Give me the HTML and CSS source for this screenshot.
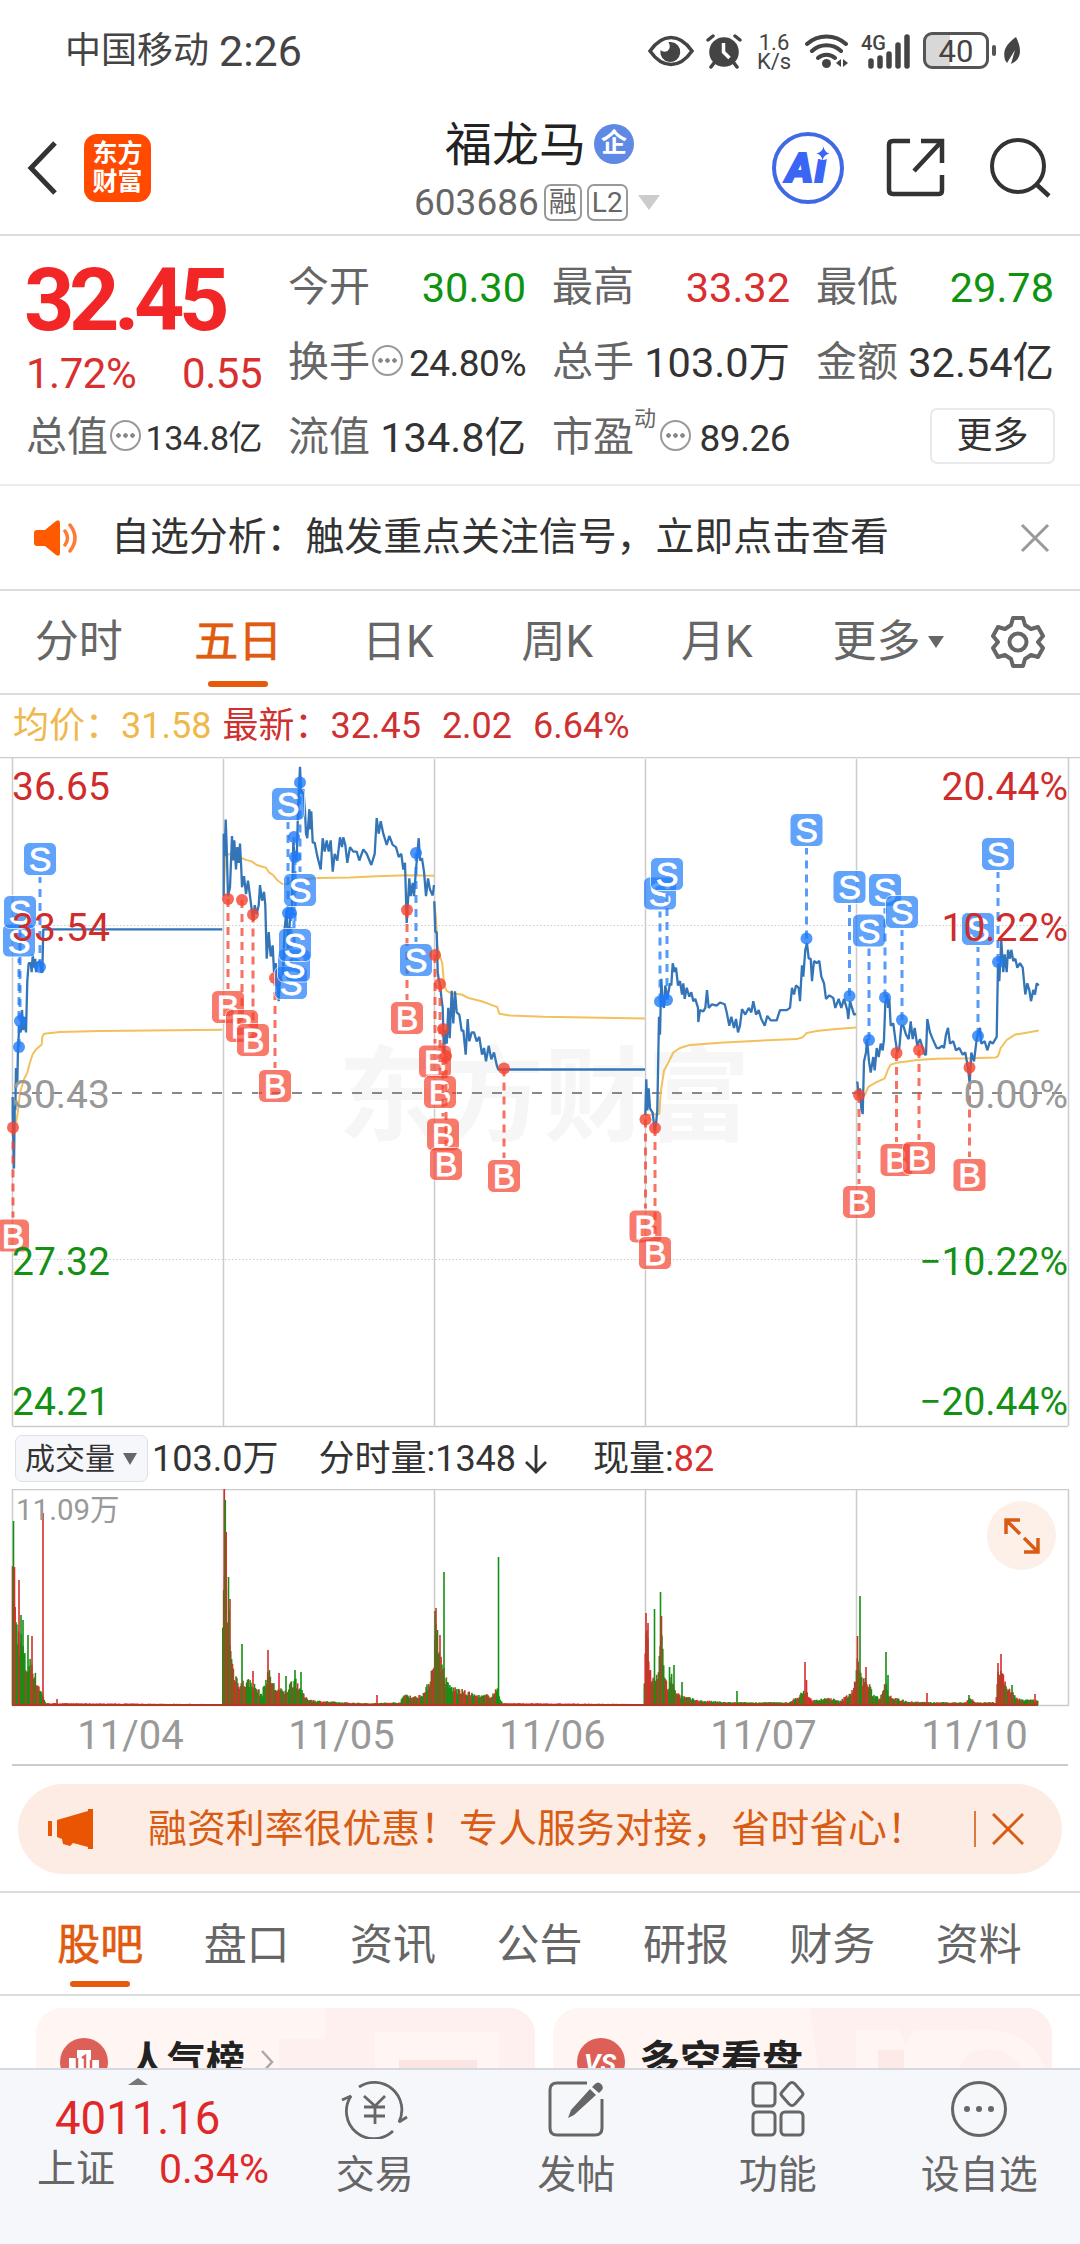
FILE: index.html
```html
<!DOCTYPE html>
<html lang="zh-CN">
<head>
    <meta charset="UTF-8">
    <meta name="viewport" content="width=device-width, initial-scale=1.0">
    <title>福龙马 603686</title>
    <link rel="stylesheet" href="styles.css">
</head>
<body>

<div class="app">
    <div class="status-bar">
        <span class="carrier">中国移动</span>
        <span class="time">2:26</span>
        <div class="status-icons">
            <svg class="i-eye" width="46" height="32" viewBox="0 0 46 32"><path d="M2 16C9 6 16 2.500 23 2.500S37 6 44 16C37 26 30 29.500 23 29.500S9 26 2 16z" fill="none" stroke="#444" stroke-width="3.500"/><path d="M23 7a10 10 0 1 1-10.500 8q3 3 7 1 4-3 1-9z" fill="#444"/></svg>
            <svg class="i-alarm" width="36" height="36" viewBox="0 0 36 36"><circle cx="18" cy="19" r="14.800" fill="#444"/><path d="M2 7l5-4M34 7l-5-4M8 30l-3 4M28 30l3 4" stroke="#444" stroke-width="3.500" stroke-linecap="round"/><path d="M17.500 10v9l6 6" fill="none" stroke="#fff" stroke-width="3.500"/></svg>
            <div class="speed">1.6<br>K/s</div>
            <svg class="i-wifi" width="44" height="36" viewBox="0 0 44 36"><g fill="none" stroke="#444" stroke-width="4" stroke-linecap="round"><path d="M2 11a29 29 0 0 1 39 0M7 18a21 21 0 0 1 29 0M13 25a13 13 0 0 1 17 0"/></g><circle cx="21.500" cy="30.500" r="4.500" fill="#444"/><path d="M36 26v8l-5-4zM38 26v8l5-4z" fill="#444"/></svg>
            <svg class="i-signal" width="52" height="38" viewBox="0 0 52 38"><text class="net" x="1" y="18">4G</text><path d="M11 34v-5M20 34v-8M29 34V22M38 34V13M47 34V5" stroke="#444" stroke-width="5.500" stroke-linecap="round"/></svg>
            <div class="battery">40</div>
            <svg class="i-leaf" width="18" height="30" viewBox="0 0 18 30"><path d="M2 24C-1 13 5 7 13 1c6 12 6 22-5 27l4-14-8 13z" fill="#444"/></svg>
        </div>
    </div>

    <div class="header">
        <svg class="back" width="32" height="56" viewBox="0 0 32 56"><path d="M28 3L4 28l24 25" fill="none" stroke="#333" stroke-width="5"/></svg>
        <div class="logo">东方<br>财富</div>
        <div class="title">
            <div class="name">福龙马<span class="corp">企</span></div>
            <div class="code">603686<span class="tag">融</span><span class="tag">L2</span><i class="down"></i></div>
        </div>
        <svg class="ai" width="74" height="74" viewBox="0 0 74 74"><circle cx="37" cy="37" r="34" fill="#fff" stroke="#4169e6" stroke-width="4"/><text class="ai-text" x="15" y="51">Ai</text><circle cx="52" cy="22" r="7" fill="#fff"/><path d="M52.500 15.500q1 6 6 7-6 1.500-7 7-1-6-6-7 6-1.500 7-7z" fill="#3b66f5"/></svg>
        <svg class="share" width="60" height="60" viewBox="0 0 60 60"><g fill="none" stroke="#333" stroke-width="4.500"><path d="M24 3H7q-4 0-4 4v45q0 4 4 4h46q3 0 3-4V37M35 3h21v22M56 3L28 33"/></g></svg>
        <svg class="search" width="62" height="62" viewBox="0 0 62 62"><circle cx="28" cy="29" r="26" fill="none" stroke="#333" stroke-width="4"/><path d="M46 47l13 12" stroke="#333" stroke-width="4.500"/></svg>
    </div>

    <div class="quote">
        <div class="main-price">
            <div class="price">32.45</div>
            <div class="change red"><span>1.72%</span><span>0.55</span></div>
        </div>
        <div class="cell open"><span class="label">今开</span><b class="green">30.30</b></div>
        <div class="cell"><span class="label">最高</span><b class="red">33.32</b></div>
        <div class="cell"><span class="label">最低</span><b class="green">29.78</b></div>
        <div class="cell"><span class="label">换手</span><i class="info"></i><b class="mid">24.80%</b></div>
        <div class="cell"><span class="label">总手</span><b>103.0万</b></div>
        <div class="cell"><span class="label">金额</span><b>32.54亿</b></div>
        <div class="cell"><span class="label">总值</span><i class="info"></i><b class="small">134.8亿</b></div>
        <div class="cell"><span class="label">流值</span><b>134.8亿</b></div>
        <div class="cell"><span class="label">市盈</span><span class="sup">动</span><i class="info"></i><b class="mid">89.26</b></div>
        <div class="cell"><button class="more">更多</button></div>
    </div>

    <div class="notice">
        <svg width="46" height="38" viewBox="0 0 46 38"><path d="M3 11h8L22 2q4-2 4 2v30q0 4-4 2l-11-9H3q-3 0-3-3V14q0-3 3-3z" fill="#ff5a00"/><path d="M31 12q5 7 0 14M36 6q10 13 0 26" fill="none" stroke="#ff7a33" stroke-width="3.500" stroke-linecap="round"/></svg>
        <span class="notice-text">自选分析：触发重点关注信号，立即点击查看</span>
        <svg width="30" height="30" viewBox="0 0 30 30"><path d="M2 2l26 26M28 2L2 28" stroke="#999" stroke-width="3"/></svg>
    </div>

    <div class="period-tabs">
        <span>分时</span>
        <span class="active">五日</span>
        <span>日K</span>
        <span>周K</span>
        <span>月K</span>
        <span class="more-tab">更多<i></i></span>
        <svg width="54" height="54" viewBox="0 0 54 54"><g fill="none" stroke="#666" stroke-width="4" stroke-linejoin="round"><path d="M22 3h10l2 7 6 4 7-2 5 9-5 6 5 6-5 9-7-2-6 4-2 7H22l-2-7-6-4-7 2-5-9 5-6-5-6 5-9 7 2 6-4z"/><circle cx="27" cy="27" r="8.500"/></g></svg>
    </div>

    <div class="avg-line">
        <span class="gold">均价：31.58</span>
        <span class="latest">最新：32.45</span>
        <span>2.02</span>
        <span>6.64%</span>
    </div>

    <svg class="price-chart" width="1080" height="671" viewBox="0 0 1080 671">
        <text class="watermark" x="338" y="376">东方财富</text>
        <g class="grid">
            <path d="M0 .5H1080M12.500 669.500H1068M12.500 0V669M223.500 2V669M434.500 2V669M645.500 2V669M856.500 2V669M1068.500 0V669"/>
            <path class="dots" d="M15 168.500H1068M15 502.500H1068"/>
            <path class="zero" d="M12 336H1068"/>
        </g>
        <g id="lines"></g>
        <g id="marks"></g>
        <g class="axis">
            <text class="r" x="12" y="43">36.65</text>
            <text class="r" x="12" y="184">33.54</text>
            <text class="n" x="12" y="351">30.43</text>
            <text class="g" x="12" y="518">27.32</text>
            <text class="g" x="12" y="658">24.21</text>
            <text class="r end" x="1068" y="43">20.44%</text>
            <text class="r end" x="1068" y="184">10.22%</text>
            <text class="n end" x="1068" y="351">0.00%</text>
            <text class="g end" x="1068" y="518">−10.22%</text>
            <text class="g end" x="1068" y="658">−20.44%</text>
        </g>
    </svg>

    <div class="volume-info">
        <span class="select">成交量<i></i></span>
        <span>103.0万</span>
        <span class="minute">分时量:1348</span>
        <svg width="24" height="30" viewBox="0 0 24 30"><path d="M12 1v26M2 18l10 10 10-10" fill="none" stroke="#333" stroke-width="2.800"/></svg>
        <span class="now">现量:<em>82</em></span>
    </div>

    <div class="volume">
        <svg class="volume-chart" width="1080" height="218" viewBox="0 0 1080 218">
            <path class="frame" d="M12.500 216.500V.5H1068.500V216.500zM223.500 0V216M434.500 0V216M645.500 0V216M856.500 0V216"/>
            <g id="bars"></g>
            <text class="vol-max" x="16" y="31">11.09万</text>
        </svg>
        <div class="expand">
            <svg width="36" height="36" viewBox="0 0 36 36"><path d="M2 16V2h14M2 2l14 14M34 20v14H20M34 34L20 20" fill="none" stroke="#d95c14" stroke-width="3.500"/></svg>
        </div>
    </div>

    <div class="dates">
        <span>11/04</span><span>11/05</span><span>11/06</span><span>11/07</span><span>11/10</span>
    </div>

    <div class="promo">
        <svg width="46" height="40" viewBox="0 0 46 40"><path d="M9 11L40 2V0h5v40h-5v-2l-15-4-3 3-7-2-1-5-5-2zM0 12h4v15H0z" fill="#ea5504"/></svg>
        <span>融资利率很优惠！专人服务对接，省时省心！</span>
        <i class="bar"></i>
        <svg class="close" width="32" height="32" viewBox="0 0 32 32"><path d="M1 1l30 30M31 1L1 31" stroke="#d95c14" stroke-width="3"/></svg>
    </div>

    <div class="content-tabs">
        <span class="active">股吧</span>
        <span>盘口</span>
        <span>资讯</span>
        <span>公告</span>
        <span>研报</span>
        <span>财务</span>
        <span>资料</span>
    </div>

    <div class="cards">
        <div class="card">
            <svg class="deco" width="210" height="60" viewBox="0 0 210 60"><path d="M0 0h210v60H-46V31H0z" fill="#fdf0ee"/><path d="M50 24h124v36H50z" fill="#fff6f4"/><path d="M74 52h78v8H74z" fill="#fae5e2"/></svg>
            <svg width="48" height="48" viewBox="0 0 48 48"><circle cx="24" cy="24" r="24" fill="#dd6058"/><path d="M9 20h8v-8h14v10h8v15H9z" fill="#fff"/><path d="M17 20v15M31 22v13M22 20l3-2v13" fill="none" stroke="#dd6058" stroke-width="2.500"/></svg>
            <b>人气榜</b>
            <svg class="arrow" width="14" height="26" viewBox="0 0 14 26"><path d="M2 2l10 11L2 24" fill="none" stroke="#aaa" stroke-width="2.500"/></svg>
        </div>
        <div class="card">
            <svg class="deco" width="242" height="60" viewBox="0 0 242 60"><path d="M0 0h242v60H8z" fill="#fdf0ee"/><path d="M46 22h42l8 14 8-14h54q60-6 76 38h-22q-14-22-40-18-20 3-22 18H46z" fill="#fff6f4"/><path d="M68 42h26v18H68z" fill="#fdeae7"/></svg>
            <svg width="48" height="48" viewBox="0 0 48 48"><circle cx="24" cy="24" r="24" fill="#dd6058"/><text class="vs" x="23" y="34">VS</text></svg>
            <b class="wide">多空看盘</b>
        </div>
    </div>

    <div class="bottom-bar">
        <div class="index">
            <i class="up"></i>
            <div class="points">4011.16</div>
            <div class="index-row"><span>上证</span><em>0.34%</em></div>
        </div>
        <div class="item">
            <svg width="68" height="60" viewBox="0 0 68 60"><g fill="none" stroke="#666" stroke-width="2.800" stroke-linejoin="bevel"><path d="M18 8A27.500 27.500 0 0 1 58 43l8-5M52 52A27.500 27.500 0 0 1 10 17L1 21M23 17l11 10 10-10M34 27v18M23 28h21M23 37h21"/></g></svg>
            <span>交易</span>
        </div>
        <div class="item">
            <svg width="58" height="60" viewBox="0 0 58 60"><path d="M40 4H10q-7 0-7 7v38q0 7 7 7h38q7 0 7-7V20" fill="none" stroke="#666" stroke-width="3"/><path d="M48 5q3-3 6 0t1 6l-3 3-7-6zM43 10l6 6-22 20-6 3 3-8z" fill="#666"/></svg>
            <span>发帖</span>
        </div>
        <div class="item">
            <svg width="56" height="60" viewBox="0 0 56 60"><g fill="none" stroke="#666" stroke-width="3"><rect x="3" y="4" width="22" height="23" rx="4"/><rect x="3" y="33" width="22" height="23" rx="4"/><rect x="31" y="33" width="22" height="23" rx="4"/><path d="M39 5q3-3 6 0l7 8q2 2 0 4l-7 8q-3 3-6 0l-7-8q-2-2 0-4z"/></g></svg>
            <span>功能</span>
        </div>
        <div class="item">
            <svg width="60" height="60" viewBox="0 0 60 60"><circle cx="30" cy="30" r="26.500" fill="none" stroke="#666" stroke-width="3"/><g fill="#666"><circle cx="18" cy="30" r="3"/><circle cx="30" cy="30" r="3"/><circle cx="42" cy="30" r="3"/></g></svg>
            <span>设自选</span>
        </div>
    </div>
</div>

<script src="chart.js"></script>
</body>
</html>
```

FILE: styles.css
```css
* {
    box-sizing: border-box;
    margin: 0;
    padding: 0;
}

body {
    background: #fff;
    color: #333;
    font-family: Roboto, "Noto Sans CJK SC", sans-serif;
    line-height: 1;
}

i, em {
    font-style: normal;
}

svg {
    display: block;
    flex: none;
}

.app {
    width: 1080px;
    height: 2244px;
    overflow: hidden;
    display: flex;
    flex-direction: column;
}

.app > * {
    flex: none;
}

.red { color: #d92f2f !important; }
.green { color: #109410 !important; }

/* status bar */
.status-bar {
    height: 101px;
    padding: 0 59px 0 65px;
    display: flex;
    align-items: center;
    color: #444;
}

.carrier {
    font-size: 36px;
}

.time {
    font-size: 43px;
    margin-left: 10px;
    padding-top: 2px;
}

.status-icons {
    margin-left: auto;
    display: flex;
    align-items: center;
}

.i-alarm { margin-left: 12px; }
.i-wifi { margin-left: 13px; }
.i-signal { margin-left: 11px; }

.speed {
    width: 36px;
    margin-left: 14px;
    padding-top: 3px;
    font-size: 22px;
    line-height: 19px;
    text-align: center;
}

.net {
    font-size: 20px;
    font-weight: 500;
    fill: #444;
}

.battery {
    width: 66px;
    height: 37px;
    margin-left: 11px;
    border: 3px solid #555;
    border-radius: 9px;
    background: linear-gradient(90deg, #d8d8d8 40%, #fff 40%);
    font-size: 31px;
    line-height: 33px;
    text-align: center;
    position: relative;
}

.battery::after {
    content: "";
    position: absolute;
    right: -10px;
    top: 10px;
    width: 4px;
    height: 11px;
    border-radius: 2px;
    background: #555;
}

.i-leaf { margin-left: 14px; }

/* header */
.header {
    height: 135px;
    padding: 0 28px 0 27px;
    border-bottom: 2px solid #dcdcdc;
    display: flex;
    align-items: center;
}

.logo {
    width: 67px;
    height: 68px;
    margin-left: 25px;
    padding-top: 6px;
    border-radius: 13px;
    background: #ff4a00;
    color: #fff;
    font-size: 25px;
    font-weight: 700;
    line-height: 28px;
    text-align: center;
}

.title {
    margin-left: 263px;
    width: 247px;
    padding-top: 13px;
}

.name {
    display: flex;
    align-items: center;
    padding-left: 31px;
    height: 56px;
    font-size: 47px;
    color: #222;
}

.corp {
    width: 40px;
    height: 40px;
    margin-left: 8px;
    border-radius: 50%;
    background: #5f89e4;
    color: #fff;
    font-size: 26px;
    font-weight: 700;
    line-height: 38px;
    text-align: center;
}

.code {
    display: flex;
    align-items: center;
    height: 60px;
    font-size: 37px;
    color: #666;
}

.tag {
    height: 37px;
    margin-left: 5px;
    padding: 0 3px;
    border: 2px solid #999;
    border-radius: 7px;
    font-size: 28px;
    line-height: 33px;
}

.down {
    margin-left: 10px;
    border: 11px solid transparent;
    border-top: 15px solid #ccc;
    border-bottom: 0;
}

.ai { margin-left: 110px; }

.ai-text {
    fill: #3b66f5;
    stroke: #3b66f5;
    stroke-width: 2;
    font-size: 41px;
    font-weight: 900;
    font-style: italic;
    letter-spacing: 2px;
}

.share { margin-left: 41px; }
.search { margin-left: 44px; }

/* quote */
.quote {
    height: 250px;
    padding: 14px 25px 0 26px;
    border-bottom: 2px solid #ebebeb;
    display: grid;
    grid-template-columns: 236px 238px 238px 238px;
    grid-template-rows: repeat(3, 75px);
    column-gap: 26px;
}

.main-price {
    grid-row: span 2;
}

.price {
    margin-left: -2px;
    padding-top: 5px;
    height: 100px;
    font-size: 88px;
    line-height: 90px;
    font-weight: 700;
    letter-spacing: -5.500px;
    color: #f22626;
}

.change {
    display: flex;
    justify-content: space-between;
    font-size: 42px;
    line-height: 48px;
    letter-spacing: -0.500px;
}

.cell {
    display: flex;
    align-items: center;
    height: 75px;
    white-space: nowrap;
}

.label {
    font-size: 41px;
    color: #666;
}

.cell b {
    margin-left: auto;
    font-weight: 400;
    font-size: 41.500px;
}

.cell b.mid {
    padding-top: 1px;
    font-size: 37px;
    letter-spacing: -0.500px;
}

.cell b.small {
    font-size: 34px;
    letter-spacing: -0.500px;
}

.info {
    width: 31px;
    height: 31px;
    margin: -4px 0 0 2px;
    padding: 0 3px;
    border: 2px solid #999;
    border-radius: 50%;
    background: radial-gradient(circle, #888 2px, transparent 2.500px) center / 7px 7px repeat-x content-box;
}

.sup {
    width: 24px;
    margin-top: -38px;
    font-size: 22px;
    color: #666;
}

.more {
    width: 125px;
    height: 56px;
    margin: -3px -1px 0 auto;
    border: 2px solid #e8e9ec;
    border-radius: 7px;
    background: #fff;
    font: 36px/50px Roboto, "Noto Sans CJK SC", sans-serif;
    color: #333;
}

/* notice */
.notice {
    height: 105px;
    padding: 0 30px 0 34px;
    border-bottom: 2px solid #dcdcdc;
    display: flex;
    align-items: center;
}

.notice-text {
    margin: 0 auto 0 31px;
    font-size: 38.900px;
}

/* period tabs */
.period-tabs {
    height: 104px;
    padding-right: 34px;
    border-bottom: 2px solid #dcdcdc;
    display: flex;
    align-items: center;
    font-size: 44px;
    color: #666;
}

.period-tabs span {
    width: 159.500px;
    line-height: 104px;
    text-align: center;
    position: relative;
    left: -1px;
}

.active {
    color: #e05a10;
    -webkit-text-stroke: 0.600px #e05a10;
}

.active::after {
    content: "";
    position: absolute;
    left: 50%;
    bottom: 7px;
    width: 60px;
    height: 6px;
    margin-left: -30px;
    border-radius: 3px;
    background: #e55a0c;
}

.period-tabs .more-tab {
    width: 183px;
    margin-right: 10px;
    display: flex;
    align-items: center;
    justify-content: center;
}

.more-tab i {
    margin-left: 7px;
    border: 8px solid transparent;
    border-top: 12px solid #666;
    border-bottom: 0;
}

.avg-line {
    height: 62px;
    padding-left: 13px;
    display: flex;
    align-items: center;
    gap: 21px;
    font-size: 36px;
    color: #cf3030;
}

.gold {
    color: #efb84c;
}

.latest {
    margin-left: -10px;
}

/* price chart */
.watermark {
    font-size: 103px;
    font-weight: 700;
    fill: #f6f6f6;
}

.grid path {
    fill: none;
    stroke: #ccc;
    stroke-width: 1.500;
}

.grid .dots {
    stroke-dasharray: 1.500 2;
    stroke-width: 1;
}

.grid .zero {
    stroke: #888;
    stroke-dasharray: 10 10;
    stroke-width: 2;
}

.line {
    fill: none;
    stroke: #3475b8;
    stroke-width: 2.300;
    stroke-linejoin: bevel;
}

.line.avg {
    stroke: #f2c05c;
    stroke-width: 2;
}

.mark-s { --c: #1f7bf8; }
.mark-b { --c: #f4432f; }

.mark-dot {
    fill: var(--c);
    opacity: 0.8;
}

.mark-line {
    stroke: var(--c);
    stroke-width: 3;
    stroke-dasharray: 8 6;
    opacity: 0.75;
}

.mark-box {
    fill: var(--c);
    stroke: #fff;
    stroke-width: 1;
    opacity: 0.7;
}

.mark-text {
    fill: #fff;
    stroke: #fff;
    stroke-width: 0.800;
    font: 34px "Liberation Sans", Arial, sans-serif;
    text-anchor: middle;
}

.axis {
    font-size: 39px;
}

.axis .r { fill: #cf2c2c; }
.axis .n { fill: #999; }
.axis .g { fill: #149014; }
.axis .end { text-anchor: end; }

/* volume */
.volume-info {
    height: 61px;
    padding-left: 15px;
    display: flex;
    align-items: center;
    font-size: 36px;
}

.select {
    height: 47px;
    width: 133px;
    margin-right: 4px;
    padding-left: 9px;
    border: 1px solid #dfe1e6;
    border-radius: 7px;
    background: #f6f7fa;
    display: flex;
    align-items: center;
    font-size: 30px;
}

.select i {
    margin-left: 8px;
    border: 7px solid transparent;
    border-top: 12px solid #666;
    border-bottom: 0;
}

.minute {
    margin: 0 8px 0 40px;
}

.now {
    margin-left: 45px;
}

.now em {
    color: #d92f2f;
}

.volume {
    position: relative;
}

.frame {
    fill: none;
    stroke: #ccc;
    stroke-width: 1.500;
}

.vol-max {
    font-size: 29.500px;
    fill: #999;
}

.expand {
    position: absolute;
    right: 24px;
    top: 12px;
    width: 69px;
    height: 69px;
    border-radius: 50%;
    background: #fdf0e9;
    display: flex;
    align-items: center;
    justify-content: center;
}

.dates {
    height: 59px;
    margin: 0 12px;
    padding-left: 13px;
    border-bottom: 2px solid #ccc;
    display: flex;
    align-items: center;
    font-size: 40px;
    color: #999;
}

.dates span {
    flex: none;
    width: 211px;
    text-align: center;
}

/* promo */
.promo {
    height: 90px;
    margin: 18px 18px 17px;
    padding: 0 38px 0 30px;
    border-radius: 45px;
    background: #fcece3;
    color: #d95c14;
    display: flex;
    align-items: center;
    font-size: 38.900px;
}

.promo span {
    margin-left: 54px;
    width: 780px;
}

.bar {
    width: 2px;
    height: 36px;
    margin-left: auto;
    background: #dd7a42;
}

.close { margin-left: 16px; }

/* content tabs */
.content-tabs {
    height: 105px;
    padding: 0 28px 0 27px;
    border-top: 2px solid #dcdcdc;
    border-bottom: 2px solid #dcdcdc;
    display: flex;
    font-size: 43px;
    line-height: 104px;
    color: #666;
}

.content-tabs span {
    flex: 1;
    text-align: center;
    position: relative;
}

.cards {
    height: 72px;
    padding: 12px 28px 0 36px;
    display: flex;
    gap: 18px;
    overflow: hidden;
}

.card {
    width: 499px;
    height: 110px;
    padding: 30px 24px;
    border-radius: 26px;
    background: #fff5f3;
    display: flex;
    align-items: flex-start;
    position: relative;
    overflow: hidden;
    font-size: 39px;
    color: #222;
}

.card > * {
    position: relative;
}

.card .deco {
    position: absolute;
    right: 0;
    top: 0;
    overflow: visible;
}

.card b {
    margin: 3px 0 0 20px;
    line-height: 40px;
}

.card b.wide {
    margin-left: 14px;
    font-size: 41px;
}

.arrow {
    margin: 11px 0 0 15px;
}

.vs {
    fill: #fff;
    font-size: 26px;
    font-weight: 700;
    font-style: italic;
    text-anchor: middle;
}

/* bottom bar */
.bottom-bar {
    height: 178px;
    border-top: 2px solid #d5d8de;
    background: #f6f7fa;
    display: flex;
    color: #666;
    font-size: 39px;
}

.index {
    width: 274px;
    padding: 8px 0 0 37px;
    color: #e02828;
}

.up {
    display: block;
    width: 0;
    margin-left: 91px;
    border: 10px solid transparent;
    border-bottom: 7px solid #777;
    border-top: 0;
}

.points {
    padding: 11px 0 0 18px;
    font-size: 45.500px;
    line-height: 46px;
}

.index-row {
    display: flex;
    align-items: center;
    height: 54px;
}

.index-row span {
    width: 122px;
    color: #666;
}

.index-row em {
    font-size: 41px;
}

.item {
    width: 201.500px;
    padding-top: 9px;
    display: flex;
    flex-direction: column;
    align-items: center;
    gap: 16px;
}

.item span {
    line-height: 40px;
}
```

FILE: chart.js
```js
const NS = "http://www.w3.org/2000/svg";

function add(parent, tag, attrs, text) {
    const el = document.createElementNS(NS, tag);
    for (const key in attrs) el.setAttribute(key, attrs[key]);
    if (text) el.textContent = text;
    parent.appendChild(el);
    return el;
}

// one entry per session: x offset, price points, average points
const sessions = [
    [0,
        "38,800 38,840 42,960 44,820 46,830 48,735 52,770 54,690 58,640 62,655 66,605 70,650 74,620 78,655 82,540 86,500 92,500 95,520 98,480 102,510 106,490 108,520 112,500 120,495 124,520 127,520 130,424 667,424",
        "38,800 40,820 48,860 54,830 60,790 72,760 82,745 90,722 98,704 108,693 125,682 127,665 132,658 180,654 300,652 667,649"],
    [0,
        "671,350 671,210 674,260 677,178 680,240 684,350 690,330 696,215 700,270 703,225 708,290 712,240 716,275 720,232 724,290 726,330 732,305 738,345 744,315 750,350 756,385 760,405 764,370 770,390 776,370 780,325 786,360 792,340 796,370 800,490 806,430 812,485 818,460 822,520 828,500 832,550 836,585 840,530 848,540 854,420 860,380 864,480 870,400 876,370 880,230 884,260 890,270 894,160 900,60 904,120 910,110 915,160 918,210 922,220 928,155 930,200 934,160 938,230 944,230 952,260 962,290 968,220 974,250 980,225 986,250 992,225 998,295 1004,255 1012,270 1020,218 1026,240 1030,218 1036,235 1042,275 1050,240 1060,250 1070,250 1078,270 1090,245 1100,255 1114,280 1124,255 1130,175 1136,210 1142,182 1150,210 1160,235 1168,215 1178,235 1188,240 1196,262 1204,255 1210,290 1215,275 1220,410 1228,310 1232,350 1238,320 1242,350 1248,290 1256,220 1260,270 1266,265 1272,295 1278,350 1284,310 1290,335 1298,348 1302,325",
        "671,350 676,260 690,255 726,265 740,269 755,272 770,280 798,286 806,296 820,303 832,314 846,322 860,324 875,315 950,309 1050,308 1130,305 1220,303 1302,304"],
    [400,
        "103,361 106,430 110,430 113,520 117,540 120,545 124,575 128,600 132,708 137,650 140,680 145,600 149,668 155,562 160,635 165,563 170,610 178,615 185,652 190,650 197,705 203,625 208,675 215,655 222,655 230,675 238,665 246,705 252,690 258,720 266,685 274,715 282,700 290,728 295,738 735,738",
        "103,361 108,400 112,460 118,480 127,500 132,548 140,562 155,568 185,570 205,578 245,585 280,595 292,598 298,613 330,617 430,620 735,624"],
    [620,
        "76,840 79,760 82,830 86,780 90,825 98,835 104,875 108,860 112,830 117,620 120,660 124,535 128,590 132,600 136,550 142,580 150,545 154,550 158,500 164,520 168,510 174,550 180,540 186,570 190,545 194,580 200,555 208,575 214,565 220,585 226,580 234,600 235,632 240,605 250,608 256,600 261,560 266,600 276,592 290,595 300,588 314,592 320,610 328,640 334,620 342,645 348,625 354,655 360,640 366,603 376,615 386,600 394,610 400,585 408,615 416,605 424,625 434,640 442,618 452,628 470,628 480,605 500,605 510,600 516,555 522,570 528,550 536,555 540,585 546,505 550,530 556,470 561,455 566,490 572,490 576,540 582,495 590,500 598,495 604,530 612,545 618,580 628,572 640,578 646,600 656,580 664,600 672,580 682,605 685,625 690,585 698,605 702,615 708,613",
        "76,840 118,838 122,790 132,740 142,727 160,700 180,690 210,683 300,678 400,674 530,670 548,666 560,656 590,652 640,648 708,644"],
    [620,
        "712,765 716,800 720,780 724,825 728,838 732,720 738,700 741,670 747,720 752,745 760,710 764,740 770,690 776,710 782,680 788,695 792,670 796,590 802,570 804,600 808,580 812,640 820,635 826,670 832,700 838,690 844,640 850,640 858,660 866,670 872,630 878,670 884,645 892,685 900,670 908,690 914,705 918,705 922,625 930,655 938,670 950,690 958,690 966,685 972,690 978,660 984,645 990,680 1000,675 1008,695 1018,690 1028,705 1036,700 1044,735 1049,770 1054,700 1062,720 1070,670 1080,645 1084,680 1094,675 1102,695 1110,675 1118,680 1130,665 1134,500 1138,540 1144,450 1150,520 1154,480 1160,520 1164,470 1170,490 1174,470 1180,495 1186,490 1192,510 1200,500 1208,510 1216,570 1222,545 1228,560 1233,585 1240,560 1245,570 1250,545 1256,550",
        "712,795 735,795 745,777 768,767 794,758 804,738 812,727 830,723 860,720 890,717 950,714 1050,713 1128,711 1134,708 1142,690 1160,672 1185,660 1215,656 1256,651"]
];

function scalePoints(str, x0) {
    return str.split(" ").map(p => {
        const [x, y] = p.split(",").map(Number);
        return (x0 + x / 3).toFixed(1) + "," + (y / 2.24 - 17).toFixed(1);
    }).join(" ");
}

const lines = document.getElementById("lines");
sessions.forEach(([x0, price, avg]) => {
    add(lines, "polyline", { class: "line avg", points: scalePoints(avg, x0) });
    add(lines, "polyline", { class: "line", points: scalePoints(price, x0) });
});

// buy / sell marks: type, x, dot y, badge y
const marks = [
    ["B", 13, 370.5, 478.5], ["S", 19, 290, 183.5], ["S", 20, 264, 155], ["S", 40, 210, 102],
    ["B", 228, 142, 250], ["B", 242, 143, 269], ["B", 253, 157.5, 283], ["B", 275, 221, 329],
    ["S", 291, 156, 226], ["S", 294, 80, 208.5], ["S", 295, 100, 188], ["S", 288, 156, 47], ["S", 300, 25.5, 133],
    ["B", 407, 153, 261], ["S", 416, 96, 203],
    ["B", 435, 198, 304.5], ["B", 440, 227, 335], ["B", 443, 272, 377.5], ["B", 446, 299, 407], ["B", 504, 311.5, 419],
    ["B", 645.5, 362.5, 469.5], ["B", 655, 371, 496], ["S", 660, 244.5, 136.5], ["S", 667, 243, 117],
    ["S", 806.5, 181.5, 73], ["S", 849.5, 239, 130], ["S", 869, 283, 173.5], ["S", 885, 240.5, 133], ["S", 902, 263, 155],
    ["B", 859, 338, 445], ["B", 896.5, 296, 403], ["B", 919, 293, 401], ["B", 969.5, 310.5, 418],
    ["S", 978, 279, 172], ["S", 998, 205, 97]
];

const marksGroup = document.getElementById("marks");
marks.forEach(([type, x, dot, y]) => {
    const g = add(marksGroup, "g", { class: type === "S" ? "mark-s" : "mark-b" });
    const edge = y < dot ? y + 18 : y - 18;
    add(g, "line", { class: "mark-line", x1: x, x2: x, y1: dot, y2: edge });
    add(g, "circle", { class: "mark-dot", cx: x, cy: dot, r: 6 });
    add(g, "rect", { class: "mark-box", x: x - 16.5, y: y - 16.5, width: 33, height: 33, rx: 6 });
    add(g, "text", { class: "mark-text", x: x, y: y + 12 }, type);
});

// volume: envelope [x, height] and single peaks [x, height, colour]
const envelope = [
    [12, 150], [15, 110], [18, 85], [22, 75], [26, 45], [32, 50], [36, 30], [40, 20], [43, 10], [46, 2], [222, 1],
    [223, 100], [225, 170], [227, 110], [229, 105], [231, 60], [234, 38], [240, 25], [250, 28], [262, 12], [268, 40],
    [275, 20], [285, 15], [295, 32], [302, 15], [306, 8], [315, 5], [340, 3], [370, 2], [400, 3], [405, 13], [415, 9],
    [425, 15], [430, 30], [434, 60], [436, 90], [440, 55], [444, 40], [447, 25], [452, 20], [465, 15], [480, 10],
    [492, 12], [497, 18], [500, 8], [503, 2], [644, 1], [645, 80], [648, 75], [651, 30], [656, 28], [660, 60],
    [662, 80], [664, 45], [668, 20], [671, 35], [676, 15], [682, 10], [700, 5], [730, 3], [790, 3], [800, 12],
    [806, 16], [812, 5], [830, 8], [840, 4], [848, 12], [853, 18], [856, 30], [858, 60], [861, 32], [867, 28],
    [873, 12], [880, 8], [885, 30], [888, 15], [893, 8], [910, 4], [930, 3], [965, 3], [970, 9], [975, 3],
    [996, 3], [998, 40], [1001, 45], [1005, 25], [1012, 14], [1018, 7], [1038, 5]
];
const peaks = [
    [13.5, 184, "g"], [14.5, 138, "r"], [19, 125, "r"], [21, 90, "g"], [23, 85, "g"], [28, 70, "g"], [32, 69, "r"],
    [43, 192, "r"], [57, 6, "r"], [224.3, 216, "r"], [225.3, 205, "g"], [226.2, 173, "r"], [228.5, 128, "g"], [230, 106, "r"],
    [242, 61, "g"], [253, 34, "r"], [268, 55, "r"], [279, 32, "r"], [286, 29, "g"], [295, 35, "g"], [301, 33, "g"],
    [377, 10, "r"], [435, 94, "g"], [436, 97, "r"], [437.5, 75, "g"], [440, 70, "r"], [444, 133, "g"], [498.5, 148, "g"],
    [646, 92, "r"], [648, 82, "r"], [654.5, 96, "g"], [660.5, 113, "g"], [661.5, 89, "r"], [669.5, 38, "g"],
    [674, 40, "g"], [682, 23, "g"], [737, 14, "g"], [805, 43, "r"], [806.5, 25, "r"], [857.5, 69, "r"], [860, 109, "g"],
    [866, 38, "r"], [886, 53, "g"], [888, 30, "g"], [927, 12, "r"], [969, 10, "g"], [998, 42, "r"], [1001, 51, "r"],
    [1012, 20, "g"], [1035, 11, "r"]
];

const bars = document.getElementById("bars");
const colors = { r: "#d3302b", g: "#149014" };

function bar(x, h, color) {
    add(bars, "rect", { x: x - 0.8, y: (216 - h).toFixed(1), width: 1.6, height: h.toFixed(1), fill: color });
}

let seed = 7;
function random() {
    seed = (seed * 16807) % 2147483647;
    return seed / 2147483647;
}

let k = 0;
for (let x = 12.5; x < 1038; x += 0.88) {
    while (envelope[k + 1][0] < x) k++;
    const [xa, ha] = envelope[k];
    const [xb, hb] = envelope[k + 1];
    const h = ha + (hb - ha) * (x - xa) / (xb - xa);
    const calm = (x > 46 && x < 222) || (x > 503 && x < 644);
    const r = random();
    const color = calm ? colors.r : r < 0.4 ? colors.r : r < 0.6 ? "#75621a" : colors.g;
    bar(x, Math.max(1, h * (0.6 + 0.4 * random())), color);
}
peaks.forEach(([x, h, c]) => bar(x, h, colors[c]));
add(bars, "rect", { x: 12, y: 215, width: 1026, height: 2, fill: "#b03a24" });
```
